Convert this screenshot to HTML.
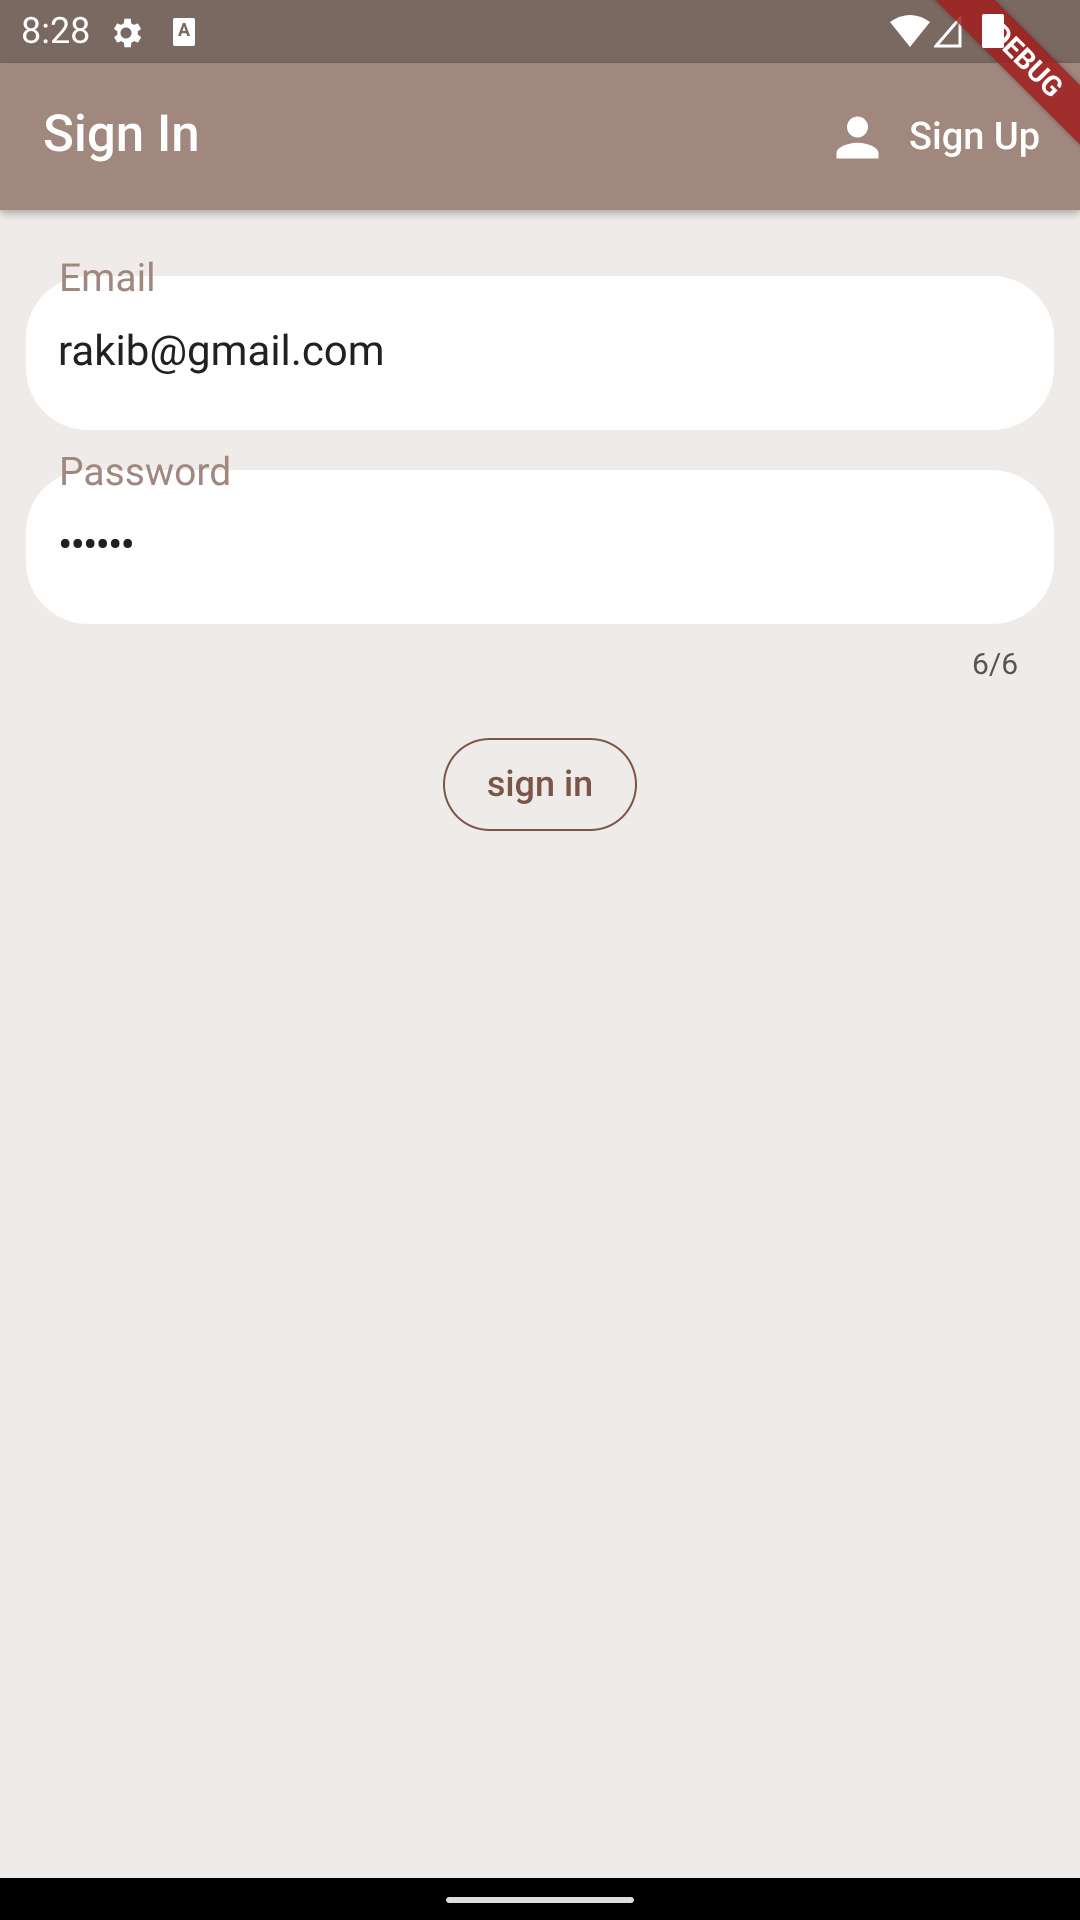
<!DOCTYPE html>
<html><head><meta charset="utf-8"><style>
html,body{margin:0;padding:0;width:1080px;height:1920px;overflow:hidden;background:#efebe9;font-family:"Roboto","Liberation Sans",sans-serif;position:relative}
.abs{position:absolute}
#status{left:0;top:0;width:1080px;height:63px;background:#7a6961}
#bar{left:0;top:63px;width:1080px;height:147px;background:#a1887f;box-shadow:0 3px 8px rgba(0,0,0,0.3)}
.field{left:26px;width:1028px;height:154px;background:#fff;border-radius:62px}
.lbl{color:#a1887f;font-size:39px;left:59px;line-height:1}
.txt{color:#212121;font-size:42px;left:58px;line-height:1}
#btn{left:443px;top:738px;width:194px;height:93px;border:2px solid #7b5548;border-radius:47px;box-sizing:border-box;color:#7b5548;font-size:36px;font-weight:500;text-align:center;line-height:89px}
#nav{left:0;top:1878px;width:1080px;height:42px;background:#000}
#handle{left:446px;top:1897px;width:188px;height:6px;border-radius:3px;background:#ddd}
#debug{left:856px;top:40px;width:340px;height:42px;background:rgba(160,30,30,0.85);transform:rotate(45deg);color:#fff;font-weight:bold;font-size:28px;text-align:center;line-height:42px;box-shadow:0 0 6px rgba(0,0,0,0.3)}
</style></head><body>
<div id="status" class="abs">
  <div class="abs" style="left:21px;top:10px;color:#fff;font-size:36px;line-height:42px">8:28</div>
  <svg class="abs" style="left:107px;top:14px" width="38" height="38" viewBox="0 0 24 24"><path fill="#fff" d="M19.4 13a7.5 7.5 0 000-2l2.1-1.6-2-3.5-2.5 1a7.3 7.3 0 00-1.7-1L15 3h-4l-.4 2.9a7.3 7.3 0 00-1.7 1l-2.5-1-2 3.5L6.6 11a7.5 7.5 0 000 2l-2.1 1.6 2 3.5 2.5-1a7.3 7.3 0 001.7 1L11 21h4l.4-2.9a7.3 7.3 0 001.7-1l2.5 1 2-3.5zM12 15.5a3.5 3.5 0 110-7 3.5 3.5 0 010 7z"/></svg>
  <div class="abs" style="left:173px;top:18px;width:22px;height:28px;background:#fff;border-radius:2px;color:#7a6961;font-size:18px;font-weight:bold;text-align:center;line-height:26px">A</div>
  <svg class="abs" style="left:890px;top:14px" width="40" height="34" viewBox="0 0 40 34"><path fill="#fff" d="M0 8Q20 -6 40 8L20 33Z"/></svg>
  <svg class="abs" style="left:934px;top:16px" width="30" height="32" viewBox="0 0 30 32"><path fill="none" stroke="#fff" stroke-width="3" d="M26 2L2 30H26Z"/></svg>
</div>
<div id="bar" class="abs">
  <div class="abs" style="left:43px;top:46px;color:#fff;font-size:51px;font-weight:500;line-height:1">Sign In</div>
  <svg class="abs" style="left:826px;top:43px" width="63" height="63" viewBox="0 0 24 24"><path fill="#fff" d="M12 12a4 4 0 100-8 4 4 0 000 8zm0 2c-2.7 0-8 1.3-8 4v2h16v-2c0-2.7-5.3-4-8-4z"/></svg>
  <div class="abs" style="left:909px;top:55px;color:#fff;font-size:38px;font-weight:500;line-height:1">Sign Up</div>
</div>
<div class="abs field" style="top:276px"></div>
<div class="abs lbl" style="top:259px">Email</div>
<div class="abs txt" style="top:331px">rakib@gmail.com</div>
<div class="abs field" style="top:470px"></div>
<div class="abs lbl" style="top:453px">Password</div>
<div class="abs txt" style="top:524px;font-size:43px;letter-spacing:-2px">••••••</div>
<div class="abs" style="left:972px;top:650px;color:#555;font-size:30px;line-height:1">6/6</div>
<div id="btn" class="abs">sign in</div>
<div id="debug" class="abs">DEBUG</div>
<div class="abs" style="left:982px;top:14px;width:22px;height:34px;background:#fff;border-radius:2px"></div>
<div id="nav" class="abs"></div>
<div id="handle" class="abs"></div>
</body></html>
